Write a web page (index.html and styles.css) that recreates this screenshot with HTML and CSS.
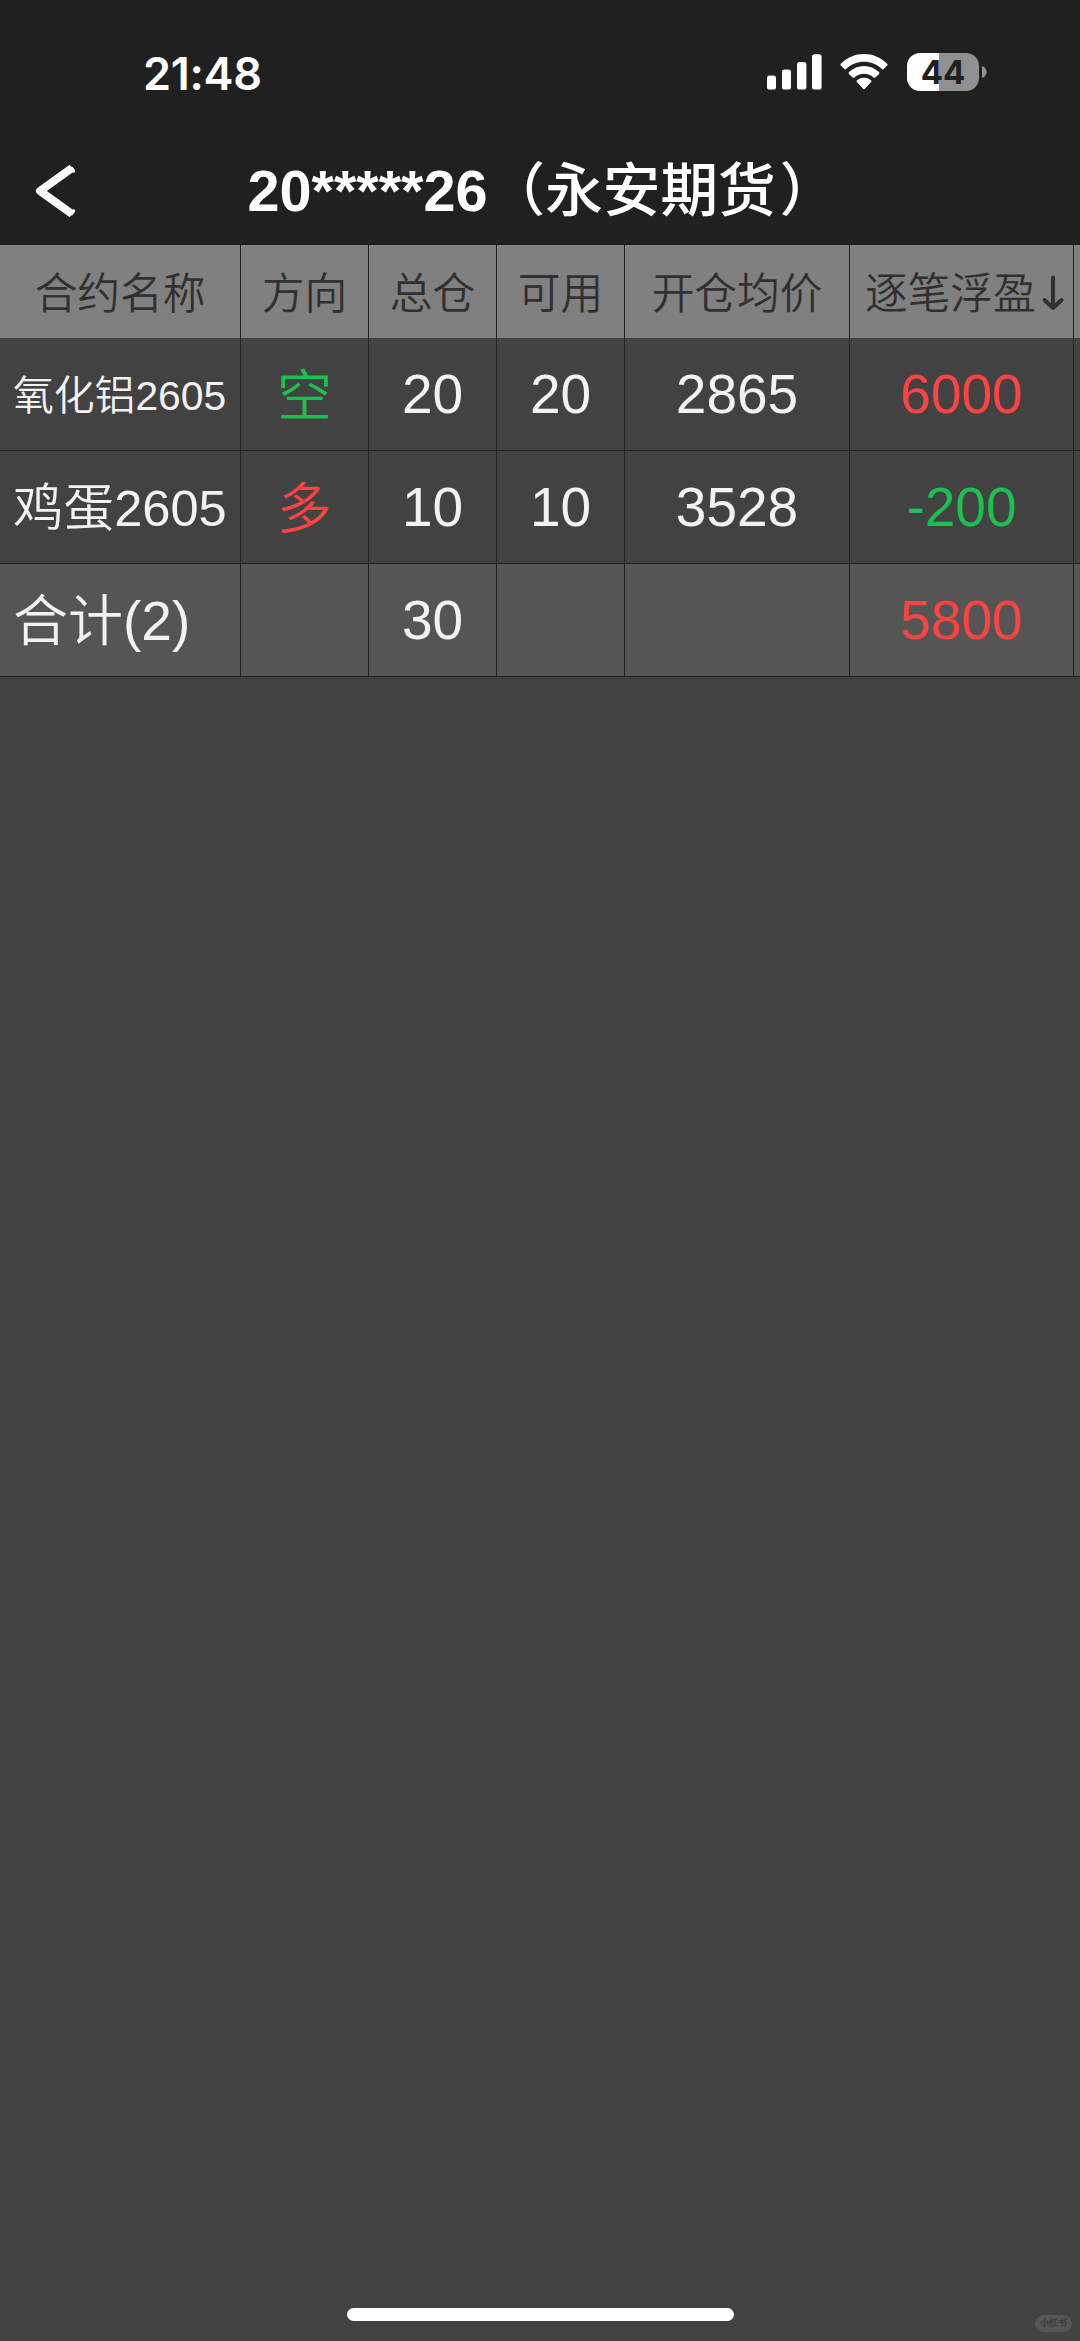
FILE: index.html
```html
<!DOCTYPE html>
<html lang="zh-CN">
<head>
    <meta charset="UTF-8">
    <title>20*****26（永安期货）</title>
    <link rel="stylesheet" href="styles.css">
</head>
<body>
    <header class="top">
        <div class="status-bar">
            <span class="time">21:48</span>
            <div class="status-icons">
                <svg class="signal" width="55" height="36" viewBox="0 0 55 36" fill="#fff">
                    <rect x="0" y="21.5" width="9" height="14" rx="2.6"/>
                    <rect x="15" y="15.5" width="9" height="20" rx="2.6"/>
                    <rect x="30" y="8" width="9.4" height="27.5" rx="2.6"/>
                    <rect x="45" y="0.3" width="9.6" height="35.2" rx="2.6"/>
                </svg>
                <svg class="wifi" width="48" height="36" viewBox="0 0 48 36" fill="#fff">
                    <path d="M.8 9.7C14-3.2 34-3.2 47.2 9.7q.9.9 0 1.8l-3.5 3.5q-.9.9-1.8 0C31.5 5.3 16.5 5.3 6.1 15q-.9.9-1.8 0L.8 11.5q-.9-.9 0-1.8z"/>
                    <path d="M9 18.1c8.500-8 21.500-8 30 0q.9.900 0 1.800l-3.600 3.500q-.9.800-1.800 0c-5.500-4.900-13.700-4.900-19.200 0q-.9.800-1.800 0L9 19.900q-.9-.9 0-1.800z"/>
                    <path d="M17 26.300c4.100-3.300 9.900-3.300 14 0q1 .9.100 1.800l-6.200 6.600q-.9.900-1.800 0l-6.200-6.600q-.9-.9.1-1.800z"/>
                </svg>
                <div class="battery">
                    <span class="battery-level">44</span>
                    <svg width="5" height="12" viewBox="0 0 5 12" fill="#919191">
                        <path d="M0 0c6 1.500 6 10.500 0 12z"/>
                    </svg>
                </div>
            </div>
        </div>
        <div class="nav-bar">
            <svg class="back" width="42" height="54" viewBox="0 0 42 54">
                <path d="M37 4L5 27l32 23" fill="none" stroke="#fafafa" stroke-width="8" stroke-linejoin="round"/>
                <path d="M36.500 4.400l2 2.600M36.500 49.600l2-2.600" fill="none" stroke="#fafafa" stroke-width="3.500" stroke-linecap="round"/>
            </svg>
            <h1 class="title">20*****26<span class="broker">（永安期货<span class="close">）</span></span></h1>
        </div>
    </header>

    <table class="positions">
        <colgroup>
            <col class="col-name">
            <col class="col-small">
            <col class="col-small">
            <col class="col-small">
            <col class="col-price">
            <col class="col-profit">
            <col class="col-next">
        </colgroup>
        <thead>
            <tr>
                <th>合约名称</th>
                <th>方向</th>
                <th>总仓</th>
                <th>可用</th>
                <th>开仓均价</th>
                <th>
                    <div class="sort">
                        逐笔浮盈
                        <svg class="sort-arrow" width="22" height="36" viewBox="0 0 22 36" fill="none" stroke="#303030" stroke-width="4" stroke-linecap="round" stroke-linejoin="round">
                            <path d="M11 2.500V33M2.500 25l8.500 8 8.500-8"/>
                        </svg>
                    </div>
                </th>
                <th></th>
            </tr>
        </thead>
        <tbody>
            <tr>
                <td class="name name-long">氧化铝2605</td>
                <td class="side green">空</td>
                <td>20</td>
                <td>20</td>
                <td>2865</td>
                <td class="red">6000</td>
                <td></td>
            </tr>
            <tr>
                <td class="name name-mid">鸡蛋2605</td>
                <td class="side red">多</td>
                <td>10</td>
                <td>10</td>
                <td>3528</td>
                <td class="green">-200</td>
                <td></td>
            </tr>
            <tr class="total">
                <td class="name">合计(2)</td>
                <td></td>
                <td>30</td>
                <td></td>
                <td></td>
                <td class="red">5800</td>
                <td></td>
            </tr>
        </tbody>
    </table>

    <footer class="bottom">
        <div class="home-indicator"></div>
        <span class="badge">小红书</span>
    </footer>
</body>
</html>
```

FILE: styles.css
```css
* {
    box-sizing: border-box;
}
body {
    display: flex;
    flex-direction: column;
    margin: 0;
    height: 2341px;
    overflow: hidden;
    background: #424242;
    color: #f2f2f2;
    font-family: "Liberation Sans", "Noto Sans CJK SC", sans-serif;
}

/* status bar + title */
.top {
    height: 245px;
    background: #202020;
    border-bottom: 1px solid #1a1a1a;
}
.status-bar {
    display: flex;
    justify-content: space-between;
    height: 140px;
    padding: 53px 93px 0 143px;
}
.time {
    color: #fff;
    font: 600 45px/41px Inter, sans-serif;
    letter-spacing: -0.3px;
}
.status-icons {
    display: flex;
    align-items: flex-start;
}
.signal {
    margin: 1px 18px 0 0;
}
.wifi {
    margin: 1px 19px 0 0;
}
.battery {
    display: flex;
    align-items: center;
    gap: 3px;
    height: 38px;
}
.battery-level {
    width: 72px;
    height: 38px;
    border-radius: 13px;
    background: linear-gradient(90deg, #fff 44%, #919191 44%);
    color: #202020;
    font: 700 33px/39px Inter, sans-serif;
    text-align: center;
}
.nav-bar {
    display: flex;
    align-items: center;
    height: 101px;
    padding: 0 35px;
}
.title {
    flex: 1;
    margin: 0 42px 0 0;
    color: #fff;
    font-size: 57.6px;
    line-height: 80px;
    text-align: center;
    white-space: nowrap;
}
.broker {
    font-weight: 500;
}
.close {
    display: inline-block;
    width: 57px;
    text-indent: 4px;
}

/* positions table */
.positions {
    table-layout: fixed;
    width: 1080px;
    border-spacing: 0;
}
.col-name {
    width: 241px;
}
.col-small {
    width: 128px;
}
.col-price {
    width: 225px;
}
.col-profit {
    width: 224px;
}
.col-next {
    width: 6px;
}
th,
td {
    padding: 0;
    border-right: 1px solid #222;
    text-align: center;
    white-space: nowrap;
}
th:last-child,
td:last-child {
    border-right: 0;
}
th {
    height: 93px;
    padding-top: 5px;
    background: #808080;
    color: #303030;
    font-size: 42.7px;
    font-weight: 350;
    line-height: 60px;
}
td {
    height: 113px;
    border-bottom: 1px solid #222;
    font-size: 55px;
    font-weight: 350;
    line-height: 80px;
}
.sort {
    display: flex;
    align-items: center;
    padding-left: 15px;
    gap: 6px;
}
.sort-arrow {
    margin-top: -2px;
}
.name {
    padding: 2px 0 0 13px;
    text-align: left;
}
.name-long {
    padding-top: 4px;
    font-size: 40.8px;
}
.name-mid {
    padding-top: 3px;
    font-size: 50.6px;
}
.side {
    padding-top: 3px;
}
.total td {
    background: #555;
}
.red {
    color: #fa4343;
}
.green {
    color: #1dbf51;
}

/* bottom area */
.bottom {
    position: relative;
    margin-top: auto;
    padding-bottom: 20px;
}
.home-indicator {
    width: 387px;
    height: 13px;
    margin: 0 auto;
    border-radius: 7px;
    background: #fff;
}
.badge {
    position: absolute;
    right: 8px;
    bottom: 9px;
    width: 37px;
    height: 17px;
    border-radius: 9px;
    background: #555;
    color: #3a3a3a;
    font-size: 9px;
    font-weight: bold;
    line-height: 17px;
    text-align: center;
}
```
